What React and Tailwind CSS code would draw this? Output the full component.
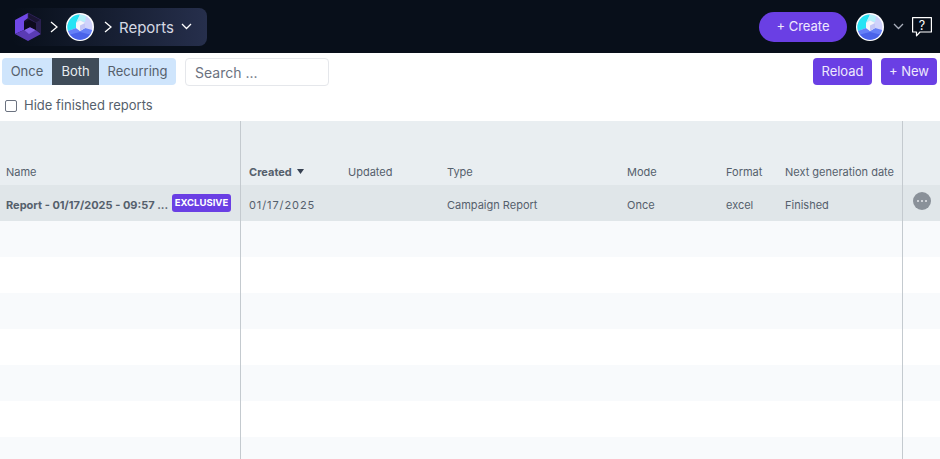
import React from 'react';

const FONT = { fontFamily: 'Inter, "Noto Sans", sans-serif' };

const BrandLogo = () => (
  <svg width="26" height="28" viewBox="0 0 26 28" className="shrink-0">
    <path d="M13 0 L26 7 V21 L13 28 L0 21 V7 Z" fill="#17122e" />
    <path d="M13 0 L13 5 L9 8 V17 L0 21 V7 Z" fill="#7048e6" />
    <path d="M13 0 L26 7 L21 10 L13 5 Z" fill="#1a1533" stroke="#3a2a70" strokeWidth="0.600" />
    <path d="M0 21 L9 17 L14 20 L21 17 L26 21 L13 28 Z" fill="#5a3bb4" />
    <path d="M9 17 L15 14 L21 17 L14 21 Z" fill="#8463e8" />
    <path d="M14 7 L21 10 V17 L15 14 L9 17 V10 Z" fill="#0d0a1d" />
    <path d="M21 10 L26 7 V21 L21 17 Z" fill="#2a2050" />
  </svg>
);

const WorkspaceLogo = () => (
  <svg width="28" height="28" viewBox="0 0 28 28" className="shrink-0">
    <circle cx="14" cy="14" r="14" fill="#ffffff" />
    <path d="M14 1.500 A12.500 12.500 0 0 1 26.500 14 A12.500 12.500 0 0 1 1.500 14 A12.500 12.500 0 0 1 14 1.500 Z" fill="#cfd2fb" />
    <path d="M14 1.500 L10 10 V15 L2 18 A12.500 12.500 0 0 1 14 1.500 Z" fill="#27e4f4" />
    <path d="M14 1.500 L20 3.100 L19 9 L14 7.500 L10 10 Z" fill="#b4f2fa" />
    <path d="M2 18 L10 15 L14 18 L19 15 L26.200 17 A12.500 12.500 0 0 1 2 18 Z" fill="#6680f7" />
    <path d="M4 21.500 L14 19 L24 21.500 A12.500 12.500 0 0 1 4 21.500 Z" fill="#4a63ea" />
    <path d="M14 7.500 L19 10 V15 L14 18 L10 15 V10 Z" fill="#f4f6fb" />
    <path d="M14 12.500 L19 10 V15 L14 18 Z" fill="#c4c6f6" />
  </svg>
);

const HelpIcon = () => (
  <svg width="20" height="20" viewBox="0 0 20 20" fill="none" className="shrink-0">
    <path d="M0.600 0.600 H19.400 V15 H8 L4.500 18.800 V15 H0.600 Z" stroke="#ffffff" strokeWidth="1.200" strokeLinejoin="round" />
    <text x="10" y="12.500" textAnchor="middle" fontSize="12.500" fill="#ffffff" fontFamily="Inter, sans-serif">?</text>
  </svg>
);

const Chevron = () => (
  <svg width="8" height="12" viewBox="0 0 8 12" fill="none" className="shrink-0">
    <path d="M1 1 L7 6 L1 11" stroke="#ffffff" strokeWidth="1.300" />
  </svg>
);

const Caret = ({ color }) => (
  <svg width="11" height="7" viewBox="0 0 11 7" fill="none" className="shrink-0">
    <path d="M1 1 L5.500 5.500 L10 1" stroke={color} strokeWidth="1.300" />
  </svg>
);

const Row = ({ striped, children }) => (
  <div className={`h-9 ${striped ? 'bg-[#f8fafc]' : 'bg-white'}`}>{children}</div>
);

export default function App() {
  return (
    <div className="h-[459px] w-[940px] overflow-hidden bg-white flex flex-col text-[#55606c]" style={FONT}>
      <header className="h-[53px] shrink-0 bg-[#080f1a] flex items-center pl-3 pr-2">
        <div className="h-[38px] w-[195px] rounded-lg bg-gradient-to-r from-[#080f1a] to-[#262f4c] flex items-center pl-[3px]">
          <BrandLogo />
          <span className="ml-[9px]"><Chevron /></span>
          <span className="ml-2"><WorkspaceLogo /></span>
          <span className="ml-[10px]"><Chevron /></span>
          <span className="ml-[7px] pt-[3px] text-[15px] text-[#d5d9e3]">Reports</span>
          <span className="ml-[7px]"><Caret color="#ffffff" /></span>
        </div>
        <button className="ml-auto h-[30px] w-[88px] rounded-full bg-[#6a3fe4] text-[13px] text-[#eee9fd]">+ Create</button>
        <span className="ml-[9px]"><WorkspaceLogo /></span>
        <span className="ml-[9px]"><Caret color="#aab0bc" /></span>
        <span className="ml-2"><HelpIcon /></span>
      </header>

      <div className="h-[68px] shrink-0 pl-[2px] pr-[3px] pt-[5px]">
        <div className="flex items-start">
          <div className="flex h-[27px] rounded overflow-hidden bg-[#cfe5fc] text-[13px]">
            <span className="w-[50px] flex items-center justify-center">Once</span>
            <span className="w-[47px] flex items-center justify-center bg-[#3f4c59] text-[#e8edf2]">Both</span>
            <span className="w-[77px] flex items-center justify-center">Recurring</span>
          </div>
          <input
            placeholder="Search ..."
            className="ml-[9px] h-[28px] w-[144px] rounded border border-[#e5e7eb] px-[9px] text-[14px] outline-none placeholder:text-[#6b7280]"
          />
          <button className="ml-auto h-[27px] w-[59px] rounded bg-[#6a3fe4] text-[13px] text-[#eee9fd]">Reload</button>
          <button className="ml-[9px] h-[27px] w-[56px] rounded bg-[#6a3fe4] text-[13px] text-[#eee9fd]">+ New</button>
        </div>
        <label className="mt-[10px] ml-[3px] flex items-center gap-[7px] text-[13px]">
          <input type="checkbox" className="size-[12px] appearance-none rounded-[2px] border border-[#6b7280] bg-white" />
          Hide finished reports
        </label>
      </div>

      <div className="flex-1 flex text-[11px]">
        <div className="w-[241px] shrink-0 border-r border-[#c4cacf]">
          <div className="h-[64px] bg-[#e9eef1] flex items-end pb-[5px] px-[6px]">Name</div>
          <div className="h-9 bg-[#e0e6e9] flex items-center px-[6px] font-bold whitespace-nowrap">
            <span className="w-[166px] pt-1 overflow-hidden">Report - 01/17/2025 - 09:57 ...</span>
            <span className="h-[18px] w-[59px] rounded-[3px] bg-[#6a3fe4] text-white text-[9.500px] flex items-center justify-center">EXCLUSIVE</span>
          </div>
          <Row striped /><Row /><Row striped /><Row /><Row striped /><Row /><Row striped />
        </div>

        <div className="flex-1">
          <div className="h-[64px] bg-[#e9eef1] flex items-end pb-[5px]">
            <span className="w-[107px] pl-2 font-bold flex items-center gap-[5px]">
              Created
              <svg width="7" height="5" viewBox="0 0 7 5"><path d="M0 0 H7 L3.500 5 Z" fill="#374151" /></svg>
            </span>
            <span className="w-[99px]">Updated</span>
            <span className="w-[180px]">Type</span>
            <span className="w-[99px]">Mode</span>
            <span className="w-[59px]">Format</span>
            <span className="whitespace-nowrap">Next generation date</span>
          </div>
          <div className="h-9 bg-[#e0e6e9] flex items-center pt-1">
            <span className="w-[107px] pl-2 tracking-[0.9px]">01/17/2025</span>
            <span className="w-[99px]"></span>
            <span className="w-[180px]">Campaign Report</span>
            <span className="w-[99px]">Once</span>
            <span className="w-[59px]">excel</span>
            <span>Finished</span>
          </div>
          <Row striped /><Row /><Row striped /><Row /><Row striped /><Row /><Row striped />
        </div>

        <div className="w-[38px] shrink-0 border-l border-[#c4cacf]">
          <div className="h-[64px] bg-[#e9eef1]" />
          <div className="h-9 bg-[#e0e6e9] flex items-start justify-center pt-[7px]">
            <span className="size-[18px] rounded-full bg-[#8a9199] flex items-center justify-center gap-[2px]">
              <i className="size-[2px] rounded-full bg-[#e5e7eb]" />
              <i className="size-[2px] rounded-full bg-[#e5e7eb]" />
              <i className="size-[2px] rounded-full bg-[#e5e7eb]" />
            </span>
          </div>
          <Row striped /><Row /><Row striped /><Row /><Row striped /><Row /><Row striped />
        </div>
      </div>
    </div>
  );
}
